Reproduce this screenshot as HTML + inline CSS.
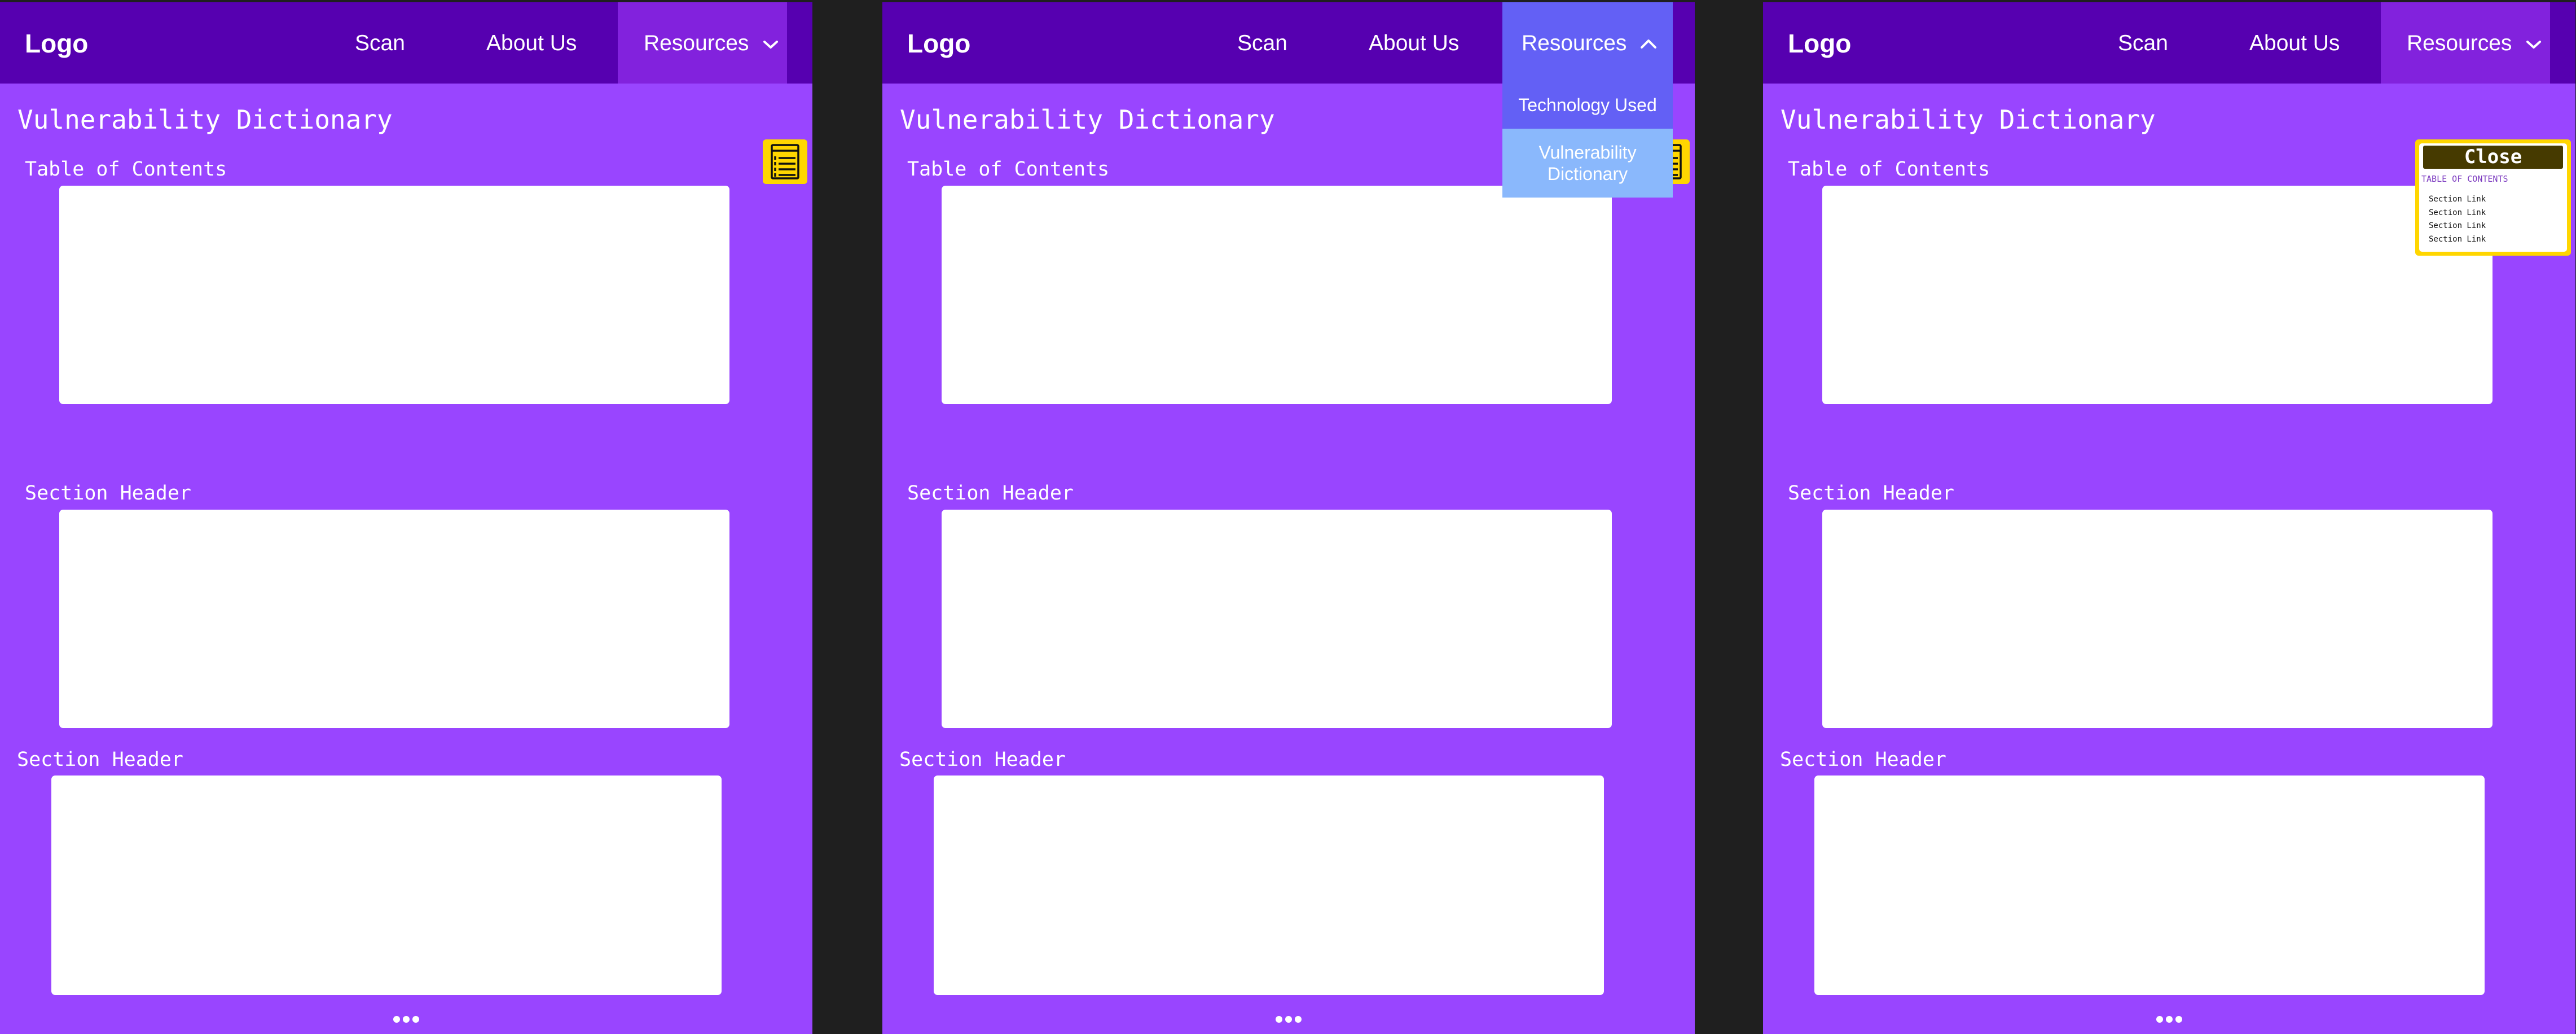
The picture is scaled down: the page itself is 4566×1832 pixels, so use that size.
<!DOCTYPE html>
<html><head><meta charset="utf-8"><style>
*{margin:0;padding:0;box-sizing:border-box}
body{width:4566px;height:1832px;background:#1f1f1f;position:relative;overflow:hidden;font-family:"Liberation Sans",sans-serif}
.p{position:absolute;top:4px;width:1440px;height:1828px;background:#9945ff;overflow:hidden}
.nav{position:absolute;left:0;top:0;width:100%;height:144px;background:#5600b0;color:#fff}
.logo{position:absolute;left:44px;top:46px;font-weight:bold;font-size:46px}
.ni{position:absolute;top:51px;font-size:39px}
.res{position:absolute;left:1095px;top:0;width:300px;height:144px}
.mono{font-family:"DejaVu Sans Mono","Liberation Mono",monospace;color:#fff;position:absolute;white-space:nowrap}
.box{position:absolute;background:#fff;border-radius:7px}
.dot{position:absolute;top:1796px;width:12px;height:12px;border-radius:50%;background:#fff}
.ic{position:absolute;left:1352px;top:243px;width:79px;height:79px;background:#ffd600;border-radius:6px}
</style></head><body>

<div class="p" style="left:0">
 <div class="nav"><div class="logo">Logo</div><div class="ni" style="left:629px">Scan</div><div class="ni" style="left:862px">About Us</div>
 <div class="res" style="background:#8222dd"><div class="ni" style="left:46px">Resources</div>
 <svg style="position:absolute;left:256px;top:65px" width="30" height="20" viewBox="0 0 30 20"><path d="M4 5 L15 15 L26 5" stroke="#fff" stroke-width="4" fill="none" stroke-linecap="round" stroke-linejoin="round"/></svg></div></div>
 <div class="mono" style="left:31px;top:181px;font-size:46px">Vulnerability Dictionary</div>
 <div class="ic"><svg width="79" height="79" viewBox="0 0 79 79"><rect x="16" y="10" width="47" height="59" rx="2" fill="none" stroke="#111" stroke-width="3.5"/><line x1="16" y1="20" x2="63" y2="20" stroke="#111" stroke-width="3.5"/><g stroke="#111" stroke-width="3.5"><line x1="22" y1="30" x2="22" y2="36"/><line x1="28" y1="33" x2="58" y2="33"/><line x1="22" y1="40" x2="22" y2="46"/><line x1="28" y1="43" x2="58" y2="43"/><line x1="22" y1="50" x2="22" y2="56"/><line x1="28" y1="53" x2="58" y2="53"/><line x1="22" y1="60" x2="22" y2="66"/><line x1="28" y1="63" x2="58" y2="63"/></g></svg></div>
 <div class="mono" style="left:44px;top:276px;font-size:35px">Table of Contents</div>
 <div class="box" style="left:105px;top:325px;width:1188px;height:387px"></div>
 <div class="mono" style="left:44px;top:850px;font-size:35px">Section Header</div>
 <div class="box" style="left:105px;top:899px;width:1188px;height:387px"></div>
 <div class="mono" style="left:30px;top:1322px;font-size:35px">Section Header</div>
 <div class="box" style="left:91px;top:1370px;width:1188px;height:389px"></div>
 <div class="dot" style="left:697px"></div><div class="dot" style="left:714px"></div><div class="dot" style="left:731px"></div>
</div>

<div class="p" style="left:1564px">
 <div class="nav"><div class="logo">Logo</div><div class="ni" style="left:629px">Scan</div><div class="ni" style="left:862px">About Us</div></div>
 <div class="mono" style="left:31px;top:181px;font-size:46px">Vulnerability Dictionary</div>
 <div class="ic"><svg width="79" height="79" viewBox="0 0 79 79"><rect x="16" y="10" width="47" height="59" rx="2" fill="none" stroke="#111" stroke-width="3.5"/><line x1="16" y1="20" x2="63" y2="20" stroke="#111" stroke-width="3.5"/><g stroke="#111" stroke-width="3.5"><line x1="22" y1="30" x2="22" y2="36"/><line x1="28" y1="33" x2="58" y2="33"/><line x1="22" y1="40" x2="22" y2="46"/><line x1="28" y1="43" x2="58" y2="43"/><line x1="22" y1="50" x2="22" y2="56"/><line x1="28" y1="53" x2="58" y2="53"/><line x1="22" y1="60" x2="22" y2="66"/><line x1="28" y1="63" x2="58" y2="63"/></g></svg></div>
 <div class="mono" style="left:44px;top:276px;font-size:35px">Table of Contents</div>
 <div class="box" style="left:105px;top:325px;width:1188px;height:387px"></div>
 <div class="mono" style="left:44px;top:850px;font-size:35px">Section Header</div>
 <div class="box" style="left:105px;top:899px;width:1188px;height:387px"></div>
 <div class="mono" style="left:30px;top:1322px;font-size:35px">Section Header</div>
 <div class="box" style="left:91px;top:1370px;width:1188px;height:389px"></div>
 <div class="dot" style="left:697px"></div><div class="dot" style="left:714px"></div><div class="dot" style="left:731px"></div>
 <div style="position:absolute;left:1099px;top:0;width:302px;height:346px;color:#fff">
  <div style="position:absolute;left:0;top:0;width:302px;height:224px;background:#6360f5"></div>
  <div style="position:absolute;left:34px;top:51px;font-size:39px">Resources</div>
  <svg style="position:absolute;left:243px;top:63px" width="32" height="22" viewBox="0 0 32 22"><path d="M4 17 L16 5 L28 17" stroke="#fff" stroke-width="4" fill="none" stroke-linecap="round" stroke-linejoin="round"/></svg>
  <div style="position:absolute;left:0;top:164px;width:302px;text-align:center;font-size:32px">Technology Used</div>
  <div style="position:absolute;left:0;top:224px;width:302px;height:122px;background:#8ab8fc"></div>
  <div style="position:absolute;left:0;top:247px;width:302px;text-align:center;font-size:32px;line-height:38px;color:#fff">Vulnerability<br>Dictionary</div>
 </div>
</div>

<div class="p" style="left:3125px">
 <div class="nav"><div class="logo">Logo</div><div class="ni" style="left:629px">Scan</div><div class="ni" style="left:862px">About Us</div>
 <div class="res" style="background:#8222dd"><div class="ni" style="left:46px">Resources</div>
 <svg style="position:absolute;left:256px;top:65px" width="30" height="20" viewBox="0 0 30 20"><path d="M4 5 L15 15 L26 5" stroke="#fff" stroke-width="4" fill="none" stroke-linecap="round" stroke-linejoin="round"/></svg></div></div>
 <div class="mono" style="left:31px;top:181px;font-size:46px">Vulnerability Dictionary</div>
 <div class="mono" style="left:44px;top:276px;font-size:35px">Table of Contents</div>
 <div class="box" style="left:105px;top:325px;width:1188px;height:387px"></div>
 <div class="mono" style="left:44px;top:850px;font-size:35px">Section Header</div>
 <div class="box" style="left:105px;top:899px;width:1188px;height:387px"></div>
 <div class="mono" style="left:30px;top:1322px;font-size:35px">Section Header</div>
 <div class="box" style="left:91px;top:1370px;width:1188px;height:389px"></div>
 <div class="dot" style="left:697px"></div><div class="dot" style="left:714px"></div><div class="dot" style="left:731px"></div>
 <div style="position:absolute;left:1156px;top:243px;width:276px;height:206px;background:#ffd600;border-radius:6px">
  <div style="position:absolute;left:7px;top:7px;width:262px;height:192px;background:#fff;border-radius:5px">
   <div style="position:absolute;left:7px;top:4px;width:248px;height:41px;background:#463a00;border-radius:3px;color:#fff;text-align:center;font:bold 34px/41px 'DejaVu Sans Mono',monospace">Close</div>
   <div style="position:absolute;left:4px;top:54px;font:15px 'DejaVu Sans Mono',monospace;color:#7d3cc0">TABLE OF CONTENTS</div>
   <div style="position:absolute;left:17px;top:88px;font:14px/23.5px 'DejaVu Sans Mono',monospace;color:#111">Section Link<br>Section Link<br>Section Link<br>Section Link</div>
  </div>
 </div>
</div>
</body></html>
